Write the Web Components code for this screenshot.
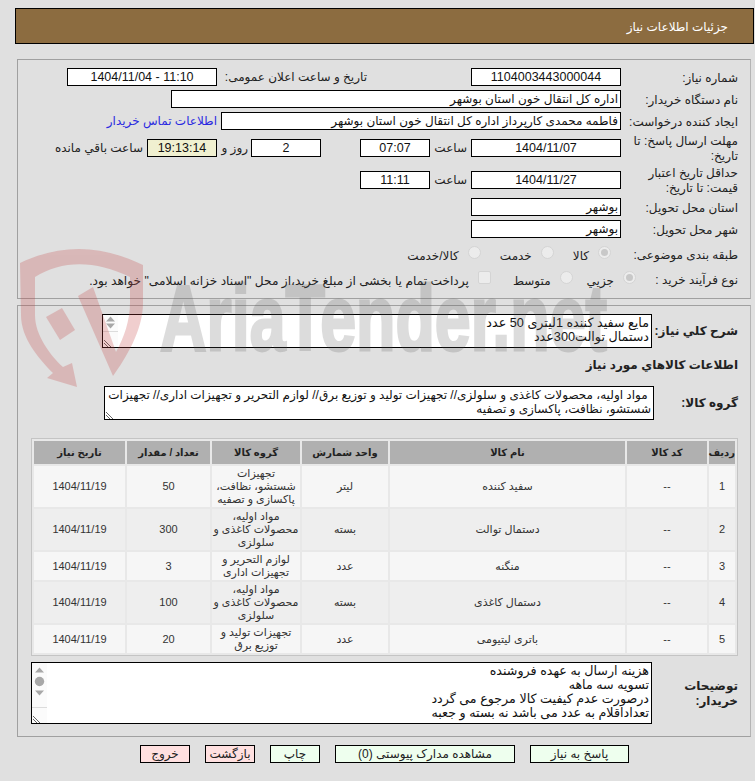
<!DOCTYPE html>
<html lang="fa" dir="rtl">
<head>
<meta charset="utf-8">
<title>جزئیات اطلاعات نیاز</title>
<style>
  html, body { margin: 0; padding: 0; background: #e0e0e0; }
  body {
    width: 755px;
    height: 781px;
    overflow: hidden;
    position: relative;
    font: 12px/15px "Liberation Sans", "DejaVu Sans", sans-serif;
    color: #222;
  }
  .page { padding: 8px 1px 0 15px; }
  .boxes { display: flex; align-items: flex-start; }
</style>
</head>
<body>
<div class="page">
  <tender-header>جزئیات اطلاعات نیاز</tender-header>

  <tender-panel style="margin: 15px 3px 0 2px; height: 230px; padding-top: 8px;">
    <form-row label="شماره نیاز:" style="height: 22px">
      <text-box width="150" align="center">1104003443000044</text-box>
      <form-row-text style="margin-right: 104px; width: 146px; margin-left: 4px;">تاریخ و ساعت اعلان عمومی:</form-row-text>
      <text-box width="150" align="center">11:10 - 1404/11/04</text-box>
    </form-row>
    <form-row label="نام دستگاه خریدار:" style="height: 22px">
      <text-box width="450">اداره کل انتقال خون استان بوشهر</text-box>
    </form-row>
    <form-row label="ایجاد کننده درخواست:" style="height: 27px">
      <text-box width="400">فاطمه محمدی کارپرداز اداره کل انتقال خون استان بوشهر</text-box>
      <form-row-text style="margin-right: 4px; color: #2a2ae0;">اطلاعات تماس خریدار</form-row-text>
    </form-row>
    <form-row label="مهلت ارسال پاسخ: تا تاریخ:" style="height: 32px">
      <text-box width="150" align="center">1404/11/07</text-box>
      <form-row-text style="margin-right: 4px; width: 37px;">ساعت</form-row-text>
      <text-box width="70" align="center">07:07</text-box>
      <text-box width="70" align="center" style="margin-right: 39px">2</text-box>
      <form-row-text style="margin-right: 3px; width: 31px;">روز و</form-row-text>
      <text-box width="70" align="center" tint="#f0f0d0">19:13:14</text-box>
      <form-row-text style="margin-right: 4px;">ساعت باقي مانده</form-row-text>
    </form-row>
    <form-row label="حداقل تاریخ اعتبار قیمت: تا تاریخ:" style="height: 27px">
      <text-box width="150" align="center">1404/11/27</text-box>
      <form-row-text style="margin-right: 4px; width: 37px;">ساعت</form-row-text>
      <text-box width="70" align="center">11:11</text-box>
    </form-row>
    <form-row label="استان محل تحویل:" style="height: 22px">
      <text-box width="150">بوشهر</text-box>
    </form-row>
    <form-row label="شهر محل تحویل:" style="height: 25px">
      <text-box width="150">بوشهر</text-box>
    </form-row>
    <form-row label="طبقه بندی موضوعی:" style="height: 25px">
      <choice-mark checked style="margin-right: 10px">کالا</choice-mark>
      <choice-mark style="margin-right: 19px">خدمت</choice-mark>
      <choice-mark style="margin-right: 19px">کالا/خدمت</choice-mark>
    </form-row>
    <form-row label="نوع فرآیند خرید :" style="height: 22px">
      <choice-mark checked style="margin-right: -15px">جزیي</choice-mark>
      <choice-mark style="margin-right: 14px">متوسط</choice-mark>
      <choice-mark square style="margin-right: 22px; font-size: 12.2px">پرداخت تمام یا بخشی از مبلغ خرید،از محل "اسناد خزانه اسلامی" خواهد بود.</choice-mark>
    </form-row>
  </tender-panel>

  <tender-panel style="margin: 6px 3px 0 2px; height: 422px; padding-top: 8px;">
    <form-row label="شرح کلي نیاز:" bold labelwidth="86" middle style="height: 34px">
      <note-box width="550" height="34" scroll="arrows" style="font-size: 12.7px">مایع سفید کننده 1لیتری 50 عدد<br>دستمال توالت300عدد</note-box>
    </form-row>
    <form-row label="اطلاعات کالاهاي مورد نیاز" bold labelwidth="300" style="height: 24px; margin-top: 7px;"></form-row>
    <form-row label="گروه کالا:" bold labelwidth="84" middle style="height: 34px; margin-top: 7px;">
      <note-box width="550" height="34" scroll="grip">&nbsp;مواد اولیه، محصولات کاغذی و سلولزی// تجهیزات تولید و توزیع برق// لوازم التحریر و تجهیزات اداری// تجهیزات<br>شستشو، نظافت، پاکسازی و تصفیه</note-box>
    </form-row>
    <goods-table style="margin: 18px 12px 0 13px"></goods-table>
    <form-row label="توضیحات خریدار:" bold labelwidth="86" middle style="height: 62px; margin-top: 6px;">
      <note-box width="621" height="62" scroll="full" style="font-size: 12.7px">هزینه ارسال به عهده فروشنده<br>تسویه سه ماهه<br>درصورت عدم کیفیت کالا مرجوع می گردد<br>تعداداقلام به عدد می باشد نه بسته و جعبه</note-box>
    </form-row>
  </tender-panel>

  <div class="boxes" style="gap: 15px; margin: 8px 125px 0 0;">
    <action-button width="99">پاسخ به نیاز</action-button>
    <action-button width="180">مشاهده مدارک پیوستی (0)</action-button>
    <action-button width="50">چاپ</action-button>
    <action-button width="50" danger>بازگشت</action-button>
    <action-button width="50" danger>خروج</action-button>
  </div>
</div>
<aria-watermark></aria-watermark>

<script>
class TenderHeader extends HTMLElement {
  constructor() {
    super();
    this.attachShadow({ mode: 'open' });
    this.shadowRoot.innerHTML = `
      <style>
        :host {
          display: flex;
          align-items: center;
          box-sizing: border-box;
          height: 36px;
          padding: 2px 25px 0 0;
          background: #8c6c40;
          border: 1px solid #000;
          color: #fff;
          font-size: 12px;
        }
      </style>
      <slot></slot>`;
  }
}

class TenderPanel extends HTMLElement {
  constructor() {
    super();
    this.attachShadow({ mode: 'open' });
    this.shadowRoot.innerHTML = `
      <style>
        :host {
          display: block;
          box-sizing: content-box;
          border: 1px solid #a0a0a0;
          border-right-color: #b4b4b4;
        }
      </style>
      <slot></slot>`;
  }
}

class FormRow extends HTMLElement {
  constructor() {
    super();
    const labelWidth = this.getAttribute('labelwidth');
    const bold = this.hasAttribute('bold');
    const middle = this.hasAttribute('middle');
    this.attachShadow({ mode: 'open' });
    this.shadowRoot.innerHTML = `
      <style>
        :host {
          display: flex;
          align-items: ${middle ? 'center' : 'flex-start'};
          padding-right: 12px;
        }
        .label {
          box-sizing: border-box;
          width: ${labelWidth ? labelWidth + 'px' : '117px'};
          flex: none;
          display: flex;
          align-items: center;
          height: ${middle ? 'auto' : '18px'};
          margin-top: 1px;
          font-weight: ${bold ? 'bold' : 'normal'};
          color: #222;
        }
      </style>
      <div class="label"><span></span></div>
      <slot></slot>`;
    this.shadowRoot.querySelector('.label span').textContent = this.getAttribute('label');
  }
}

class FormRowText extends HTMLElement {
  constructor() {
    super();
    this.attachShadow({ mode: 'open' });
    this.shadowRoot.innerHTML = `
      <style>:host { display: block; flex: none; padding-top: 2px; white-space: nowrap; }</style>
      <slot></slot>`;
  }
}

class TextBox extends HTMLElement {
  constructor() {
    super();
    const align = this.getAttribute('align') || 'right';
    this.attachShadow({ mode: 'open' });
    this.shadowRoot.innerHTML = `
      <style>
        :host {
          display: block;
          flex: none;
          box-sizing: border-box;
          height: 18px;
          width: ${this.getAttribute('width')}px;
          padding: 0 2px;
          border: 1px solid #000;
          background: ${this.getAttribute('tint') || '#fff'};
          color: #111;
          font-size: ${align === 'center' ? '12.5px' : '12px'};
          line-height: 16px;
          text-align: ${align};
          white-space: nowrap;
          overflow: hidden;
        }
      </style>
      <slot></slot>`;
  }
}

class ChoiceMark extends HTMLElement {
  constructor() {
    super();
    const square = this.hasAttribute('square');
    const checked = this.hasAttribute('checked');
    this.attachShadow({ mode: 'open' });
    this.shadowRoot.innerHTML = `
      <style>
        :host {
          display: flex;
          flex: none;
          align-items: flex-start;
          gap: 9px;
          white-space: nowrap;
          color: #222;
        }
        .mark {
          box-sizing: border-box;
          flex: none;
          width: 13px;
          height: 13px;
          margin-top: 1px;
          border: 1px solid #d4d4d4;
          border-radius: ${square ? '2px' : '50%'};
          background: #ececec;
          display: grid;
          place-items: center;
        }
        .dot { width: 7px; height: 7px; border-radius: 50%; background: #c8c8c8; }
        .text { padding-top: 4px; }
      </style>
      <span class="mark">${checked ? '<span class="dot"></span>' : ''}</span>
      <span class="text"><slot></slot></span>`;
  }
}

class NoteBox extends HTMLElement {
  constructor() {
    super();
    const kind = this.getAttribute('scroll');
    const strip = {
      arrows: `<div class="strip line"><svg width="15" height="15" viewBox="0 0 15 15"><path d="M7.5 1.5 12 6.5H3z M3 8.5h9L7.5 13.5z" fill="#a8a8a8"/></svg></div>`,
      full: `<div class="strip line full"><svg width="15" height="45" viewBox="0 0 15 45"><path d="M7.5 4.5 12 9.5H3z M3 27.5h9L7.5 32.5z" fill="#a8a8a8"/><circle cx="7.5" cy="18.5" r="4.7" fill="#a8a8a8"/></svg></div>`,
      grip: ''
    }[kind];
    this.attachShadow({ mode: 'open' });
    this.shadowRoot.innerHTML = `
      <style>
        :host {
          display: block;
          flex: none;
          position: relative;
          box-sizing: border-box;
          width: ${this.getAttribute('width')}px;
          height: ${this.getAttribute('height')}px;
          padding: 1px 2px 0 0;
          border: 1px solid #000;
          background: #fff;
          color: #111;
          line-height: 14px;
          overflow: hidden;
        }
        .strip { position: absolute; left: 0; top: 0; bottom: 0; width: 15px; background: #fbfbfb; }
        .strip svg { display: block; }
        .line::after { content: ""; position: absolute; left: 0; right: 0; bottom: 15px; border-top: 1px solid #dcdcdc; }
        .grip { position: absolute; left: 0; bottom: 0; display: block; }
      </style>
      <slot></slot>
      ${strip}
      <svg class="grip" width="9" height="9" viewBox="0 0 9 9"><path d="M1 2 8 9 M1 5 5 9" stroke="#666" stroke-width="1" fill="none"/></svg>`;
  }
}

class GoodsTable extends HTMLElement {
  constructor() {
    super();
    const rows = [
      ['1', '--', 'سفید کننده', 'لیتر', 'تجهیزات<br>شستشو، نظافت،<br>پاکسازی و تصفیه', '50', '1404/11/19'],
      ['2', '--', 'دستمال توالت', 'بسته', 'مواد اولیه،<br>محصولات کاغذی و<br>سلولزی', '300', '1404/11/19'],
      ['3', '--', 'منگنه', 'عدد', 'لوازم التحریر و<br>تجهیزات اداری', '3', '1404/11/19'],
      ['4', '--', 'دستمال کاغذی', 'بسته', 'مواد اولیه،<br>محصولات کاغذی و<br>سلولزی', '100', '1404/11/19'],
      ['5', '--', 'باتری لیتیومی', 'عدد', 'تجهیزات تولید و<br>توزیع برق', '20', '1404/11/19']
    ];
    const heights = [41, 41, 28, 41, 28];
    const body = rows.map((row, i) => `
      <tr style="height:${heights[i]}px" class="${i % 2 ? 'even' : 'odd'}">
        ${row.map(cell => `<td>${cell}</td>`).join('')}
      </tr>`).join('');
    this.attachShadow({ mode: 'open' });
    this.shadowRoot.innerHTML = `
      <style>
        :host { display: block; }
        table {
          table-layout: fixed;
          width: 707px;
          box-sizing: border-box;
          border-collapse: separate;
          border-spacing: 2px;
          border: 1px solid #c4c4c4;
          background: #e8e8e8;
          font-size: 11px;
          line-height: 13px;
          color: #333;
        }
        th { background: #b0b0b0; font-size: 10px; font-weight: bold; color: #222; height: 23px; padding: 0; white-space: nowrap; }
        td { text-align: center; padding: 0; }
        .odd td { background: #f6f6f6; }
        .even td { background: #eeeeee; }
      </style>
      <table>
        <colgroup>
          <col style="width:26px"><col style="width:80px"><col style="width:235px">
          <col style="width:86px"><col style="width:88px"><col style="width:83px"><col style="width:91px">
        </colgroup>
        <thead><tr>
          <th>رديف</th><th>کد کالا</th><th>نام کالا</th><th>واحد شمارش</th><th>گروه کالا</th><th>تعداد / مقدار</th><th>تاریخ نیاز</th>
        </tr></thead>
        <tbody>${body}</tbody>
      </table>`;
  }
}

class ActionButton extends HTMLElement {
  constructor() {
    super();
    this.attachShadow({ mode: 'open' });
    this.shadowRoot.innerHTML = `
      <style>
        :host {
          display: block;
          flex: none;
          box-sizing: border-box;
          width: ${this.getAttribute('width')}px;
          height: 18px;
          border: 1px solid #000;
          background: ${this.hasAttribute('danger') ? '#ffe0e0' : '#eeffee'};
          color: #222;
          line-height: 16px;
          text-align: center;
          white-space: nowrap;
        }
      </style>
      <slot></slot>`;
  }
}

class AriaWatermark extends HTMLElement {
  constructor() {
    super();
    this.attachShadow({ mode: 'open' });
    this.shadowRoot.innerHTML = `
      <style>
        :host { position: absolute; left: 0; top: 0; width: 755px; height: 781px; pointer-events: none; }
        svg { display: block; }
        text { font: bold 93px "Liberation Sans", sans-serif; direction: ltr; }
      </style>
      <svg width="755" height="781" viewBox="0 0 755 781">
        <g fill="rgb(196,64,64)" opacity="0.25">
          <path d="M20 263C60 244 100 244 143 265V303C143 330 126 358 113 376L78 296 93 287 116 352C124 338 130 320 130 303V277C95 260 62 260 35 277V315C35 335 50 355 63 367L72 363 77 387 47 378 53 373C38 358 21 338 21 315Z"/>
          <path d="M46 317 62 308 75 330 60 340Z"/>
        </g>
        <text x="160" y="350" fill="rgb(85,85,85)" stroke="rgb(85,85,85)" stroke-width="3" opacity="0.2" textLength="447" lengthAdjust="spacingAndGlyphs">AriaTender.net</text>
      </svg>`;
  }
}

customElements.define('tender-header', TenderHeader);
customElements.define('tender-panel', TenderPanel);
customElements.define('form-row', FormRow);
customElements.define('form-row-text', FormRowText);
customElements.define('text-box', TextBox);
customElements.define('choice-mark', ChoiceMark);
customElements.define('note-box', NoteBox);
customElements.define('goods-table', GoodsTable);
customElements.define('action-button', ActionButton);
customElements.define('aria-watermark', AriaWatermark);
</script>
</body>
</html>
